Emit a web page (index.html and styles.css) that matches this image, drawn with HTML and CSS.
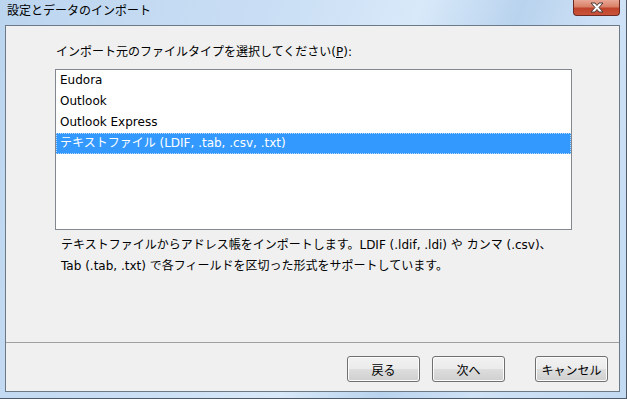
FILE: index.html
```html
<!DOCTYPE html>
<html lang="ja">

<head>
    <meta charset="utf-8">
    <link rel="stylesheet" href="styles.css">
</head>

<body>
    <div class="window">
        <div class="titlebar">
            <span class="title">設定とデータのインポート</span>
            <span class="close">
                <svg width="18" height="11" viewBox="0 0 18 11">
                    <path d="M3 1 L7 1 L9 3.5 L11 1 L15 1 L11 5.5 L15 10 L11 10 L9 7.5 L7 10 L3 10 L7 5.5 Z"
                        fill="#fff" stroke="#4a3a3a" stroke-width="1" stroke-linejoin="round" />
                </svg>
            </span>
        </div>

        <div class="client">
            <div class="main">
                <div class="prompt">インポート元のファイルタイプを選択してください(<u>P</u>):</div>
                <div class="listbox">
                    <div class="item">Eudora</div>
                    <div class="item">Outlook</div>
                    <div class="item">Outlook Express</div>
                    <div class="item selected">テキストファイル (LDIF, .tab, .csv, .txt)</div>
                </div>
                <p class="desc">テキストファイルからアドレス帳をインポートします。LDIF (.ldif, .ldi) や カンマ (.csv)、<br>Tab (.tab, .txt) で各フィールドを区切った形式をサポートしています。</p>
            </div>

            <div class="footer">
                <button class="btn">戻る</button>
                <button class="btn">次へ</button>
                <button class="btn cancel">キャンセル</button>
            </div>
        </div>
    </div>
</body>

</html>
```

FILE: styles.css
```css
html,
body {
    margin: 0;
    padding: 0;
}

body {
    font-family: "DejaVu Sans", "Noto Sans CJK JP", sans-serif;
    font-size: 12px;
    color: #000;
}

.window {
    width: 627px;
    height: 399px;
    box-sizing: border-box;
    display: flex;
    flex-direction: column;
    background: linear-gradient(110deg, #bcd5ef 0%, #c9def4 35%, #d8e9f9 55%, #b9d3ee 68%, #cfe2f6 80%, #c2daf2 100%);
    border-right: 1px solid #4f5a66;
    border-bottom: 1px solid #4f5a66;
    padding: 0 6px 6px 5px;
}

.titlebar {
    height: 25px;
    display: flex;
    align-items: flex-start;
}

.title {
    padding: 3px 0 0 2px;
    line-height: 16px;
}

.close {
    margin-left: auto;
    width: 47px;
    height: 16px;
    box-sizing: border-box;
    border: 1px solid #6d2a22;
    border-top: none;
    border-radius: 0 0 4px 4px;
    background: linear-gradient(#e9a795 0%, #d98068 45%, #c0432b 55%, #c9553c 100%);
    display: flex;
    align-items: center;
    justify-content: center;
}

.client {
    flex: 1;
    display: flex;
    flex-direction: column;
    background: #f0f0f0;
    border: 1px solid #6c7a88;
}

.main {
    flex: 1;
    padding: 18px 0 0 49px;
}

.prompt {
    line-height: 16px;
    padding-left: 1px;
}

.listbox {
    margin-top: 9px;
    width: 517px;
    height: 161px;
    box-sizing: border-box;
    border: 1px solid #828790;
    background: #fff;
}

.item {
    height: 21px;
    line-height: 20px;
    padding-left: 4px;
}

.item.selected {
    background: #3399ff;
    color: #fff;
    outline: 1px dotted #b8d8ff;
    outline-offset: -1px;
}

.desc {
    margin: 5px 0 0 6px;
    line-height: 21px;
}

.footer {
    height: 49px;
    border-top: 1px solid #a0a0a0;
    display: flex;
    justify-content: flex-end;
    align-items: flex-start;
    padding: 13px 11px 0 0;
    box-sizing: border-box;
}

.btn {
    width: 73px;
    height: 26px;
    margin: 0 0 0 12px;
    padding: 0;
    font: inherit;
    color: #000;
    border: 1px solid #707070;
    border-radius: 3px;
    background: linear-gradient(#f2f2f2 0%, #ebebeb 48%, #dddddd 52%, #cfcfcf 100%);
    box-shadow: inset 0 0 0 1px #fcfcfc;
}

.btn.cancel {
    margin-left: 30px;
}
```
